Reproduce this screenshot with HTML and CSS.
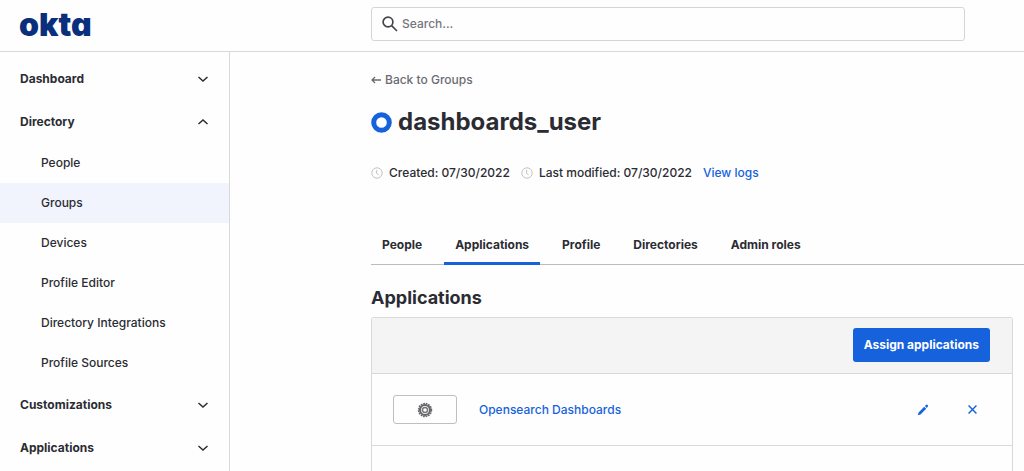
FILE: index.html
```html
<!DOCTYPE html>
<html lang="en">
<head>
<meta charset="utf-8">
<title>dashboards_user - Groups</title>
<meta name="viewport" content="width=device-width, initial-scale=1">
<link rel="stylesheet" href="styles.css">
</head>
<body>
<header class="topbar">
  <a class="logo" href="#">okta</a>
  <label class="search">
    <svg class="search-icon" viewBox="0 0 16 16" aria-hidden="true"><circle cx="6" cy="6" r="4.9"/><path d="M9.6 9.6l5.4 5.4"/></svg>
    <input class="search-input" type="search" placeholder="Search..." aria-label="Search">
  </label>
</header>
<div class="shell">
  <nav class="sidebar">
    <button class="section" type="button">Dashboard<svg class="chevron" viewBox="0 0 10 6"><path d="M.5 1L5 5l4.500-4"/></svg></button>
    <button class="section" type="button" aria-expanded="true">Directory<svg class="chevron" viewBox="0 0 10 6"><path d="M.5 5L5 1l4.500 4"/></svg></button>
    <div class="submenu">
      <a class="item" href="#">People</a>
      <a class="item current" href="#">Groups</a>
      <a class="item" href="#">Devices</a>
      <a class="item" href="#">Profile Editor</a>
      <a class="item" href="#">Directory Integrations</a>
      <a class="item" href="#">Profile Sources</a>
    </div>
    <button class="section" type="button">Customizations<svg class="chevron" viewBox="0 0 10 6"><path d="M.5 1L5 5l4.500-4"/></svg></button>
    <button class="section" type="button">Applications<svg class="chevron" viewBox="0 0 10 6"><path d="M.5 1L5 5l4.500-4"/></svg></button>
  </nav>
  <main class="main">
    <a class="back" href="#"><svg class="arrow" viewBox="0 0 10 8"><path d="M10 4H1M4 1L1 4l3 3"/></svg>Back to Groups</a>
    <h1 class="title"><svg class="ring" viewBox="0 0 21 21"><circle cx="10.5" cy="10.5" r="7.8"/></svg>dashboards_user</h1>
    <div class="meta">
      <span class="stamp"><svg class="clock" viewBox="0 0 12 12"><circle cx="6" cy="6" r="5.2"/><path d="M5.600 3v3.200l2 2"/></svg>Created: 07/30/2022</span>
      <span class="stamp"><svg class="clock" viewBox="0 0 12 12"><circle cx="6" cy="6" r="5.2"/><path d="M5.600 3v3.200l2 2"/></svg>Last modified: 07/30/2022</span>
      <a class="link" href="#">View logs</a>
    </div>
    <div class="tabs" role="tablist">
      <button class="tab" type="button" role="tab">People</button>
      <button class="tab active" type="button" role="tab" aria-selected="true">Applications</button>
      <button class="tab" type="button" role="tab">Profile</button>
      <button class="tab" type="button" role="tab">Directories</button>
      <button class="tab" type="button" role="tab">Admin roles</button>
    </div>
    <h2 class="heading">Applications</h2>
    <section class="card">
      <div class="card-bar"><button class="primary" type="button">Assign applications</button></div>
      <div class="row">
        <span class="app-logo"><svg class="gear" viewBox="0 0 16 16"><circle class="teeth" cx="8" cy="8" r="6.500"/><circle class="wheel" cx="8" cy="8" r="5"/><circle class="hub" cx="8" cy="8" r="2.500"/></svg></span>
        <a class="link" href="#">Opensearch Dashboards</a>
        <div class="actions">
          <button class="icon-button" type="button" aria-label="Edit"><svg class="pencil" viewBox="0 0 12 12"><path d="M.8 11.200l.8-2.700L7.200 2.800l2 2-5.700 5.600zM7.900 2.100l1.500-1.400q.6-.4 1.300.3t.3 1.300L9.800 3.900z"/></svg></button>
          <button class="icon-button" type="button" aria-label="Remove"><svg class="cross" viewBox="0 0 8 8"><path d="M.5.5l7 7M7.500.5l-7 7"/></svg></button>
        </div>
      </div>
      <div class="row rest"></div>
    </section>
  </main>
</div>
</body>
</html>
```
FILE: styles.css
```css
* { box-sizing: border-box; }
body {
  margin: 0;
  min-height: 100vh;
  display: flex;
  flex-direction: column;
  background: #fefefe;
  color: #2b2c33;
  font: 500 12px/20px Inter, "Liberation Sans", sans-serif;
}
button { font: inherit; color: inherit; border: 0; background: none; padding: 0; }
a { color: inherit; text-decoration: none; }
svg { flex: none; fill: none; stroke: currentColor; }

.topbar {
  flex: none;
  display: flex;
  align-items: flex-start;
  padding: 7px 59px 9px 19px;
  border-bottom: 1px solid #d9d9dc;
}
.logo {
  width: 352px;
  flex: none;
  color: #0a2f7c;
  font-size: 32px;
  line-height: 35px;
  font-weight: 900;
  font-feature-settings: "cv11";
}
.search {
  flex: 1;
  display: flex;
  align-items: center;
  gap: 4px;
  height: 34px;
  padding: 0 10px;
  border: 1px solid #d5d5d8;
  border-radius: 3px;
}
.search-icon { width: 16px; height: 16px; stroke-width: 1.7; color: #44454c; }
.search-input {
  flex: 1;
  min-width: 0;
  border: 0;
  padding: 0;
  background: none;
  font: inherit;
  color: inherit;
  outline: 0;
}
.search-input::placeholder { color: #75767d; opacity: 1; }

.shell { flex: 1; display: flex; }
.sidebar {
  flex: none;
  width: 230px;
  padding-top: 5px;
  border-right: 1px solid #d9d9dc;
}
.section {
  width: 100%;
  height: 43px;
  padding: 0 21px 0 20px;
  display: flex;
  align-items: center;
  justify-content: space-between;
  font-weight: 700;
}
.chevron { width: 10px; height: 6px; stroke-width: 1.5; }
.item { display: block; padding: 10px 41px; }
.current { background: #f1f3fd; }

.main {
  flex: 1;
  min-width: 0;
  display: flex;
  flex-direction: column;
  padding: 18px 0 0 141px;
}
.back { display: flex; align-items: center; gap: 4px; color: #6a6b73; }
.arrow { width: 10px; height: 8px; stroke-width: 1.3; }
.title {
  display: flex;
  align-items: center;
  gap: 6px;
  margin: 16px 0 0;
  font-size: 24px;
  line-height: 32px;
  font-weight: 700;
}
.ring { width: 21px; height: 21px; color: #1662dd; stroke-width: 5; }
.meta { display: flex; gap: 11px; margin-top: 25px; }
.stamp { display: flex; align-items: center; gap: 6px; }
.clock { width: 12px; height: 12px; color: #c3c3c8; }
.link { color: #1662dd; }
.tabs {
  display: flex;
  gap: 11px;
  margin-top: 52px;
  border-bottom: 1px solid #bcbcc0;
}
.tab {
  height: 30px;
  padding: 0 11px 7px;
  margin-bottom: -1px;
  border-bottom: 3px solid transparent;
  font-weight: 700;
}
.active { border-color: #1662dd; }
.heading { margin: 21px 0 7px; font-size: 18px; line-height: 24px; font-weight: 700; }
.card {
  flex: 1;
  display: flex;
  flex-direction: column;
  margin-right: 11px;
  border: solid #d9d9dc;
  border-width: 1px 1px 0;
  border-radius: 3px 3px 0 0;
}
.card-bar {
  display: flex;
  justify-content: flex-end;
  padding: 10px 22px 11px;
  background: #f4f4f4;
}
.primary {
  height: 34px;
  padding: 0 11px;
  border-radius: 3px;
  background: #1662dd;
  color: #fff;
  font-weight: 700;
}
.row {
  display: flex;
  align-items: center;
  min-height: 72px;
  padding: 0 35px 0 21px;
  border-top: 1px solid #d9d9dc;
}
.rest { flex: 1; min-height: 24px; }
.app-logo {
  display: flex;
  align-items: center;
  justify-content: center;
  width: 64px;
  height: 29px;
  margin-right: 22px;
  border: 1px solid #bfbfc3;
  border-radius: 3px;
}
.gear { width: 16px; height: 16px; color: #66666b; }
.teeth { stroke-width: 1.4; stroke-dasharray: 1.7 0.85; }
.wheel { stroke-width: 2.2; }
.hub { stroke: #77777c; stroke-width: 1.4; }
.actions { display: flex; gap: 39px; margin-left: auto; color: #1662dd; }
.icon-button { display: flex; align-items: center; }
.pencil { width: 12px; height: 12px; fill: currentColor; stroke: none; }
.cross { width: 9px; height: 9px; stroke-width: 1.3; }
```
